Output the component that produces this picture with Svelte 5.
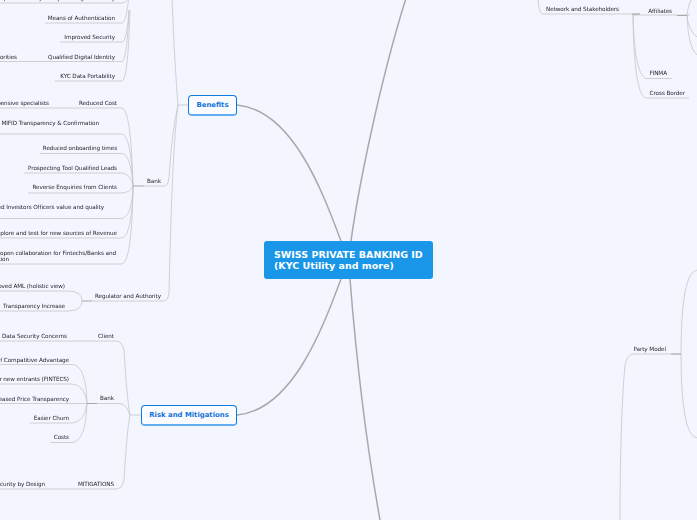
<script>
  // right edge, vertical centre, text
  const labels = [
    { t: 'Simplified Client Journey and Digital Identity', r: 115, y: -2 },
    { t: 'Means of Authentication', r: 115, y: 17.5 },
    { t: 'Improved Security', r: 115, y: 36.5 },
    { t: 'Shared with Authorities', r: 17, y: 56.5 },
    { t: 'Qualified Digital Identity', r: 115, y: 56.5 },
    { t: 'KYC Data Portability', r: 115, y: 75.5 },
    { t: 'Less expensive specialists', r: 49, y: 102.5 },
    { t: 'Reduced Cost', r: 117, y: 102.5 },
    { t: 'MIFID Transparency & Confirmation', r: 99, y: 122.5 },
    { t: 'Reduced onboarding times', r: 117, y: 148 },
    { t: 'Prospecting Tool Qualified Leads', r: 117, y: 168 },
    { t: 'Reverse Enquiries from Clients', r: 117, y: 187 },
    { t: 'Improved Investors Officers value and quality', r: 104, y: 206.5 },
    { t: 'Explore and test for new sources of Revenue', r: 117, y: 232.5 },
    { t: 'An open collaboration for Fintechs/Banks and', r: 116, y: 252.5 },
    { t: 'Innovation', r: 9, y: 258.5 },
    { t: 'Bank', r: 161, y: 180.5 },
    { t: 'Improved AML (holistic view)', r: 65, y: 285.5 },
    { t: 'Transparency Increase', r: 65, y: 305.5 },
    { t: 'Regulator and Authority', r: 161, y: 295.5 },
    { t: 'Data Security Concerns', r: 67, y: 335.5 },
    { t: 'Client', r: 114, y: 335.5 },
    { t: 'Loss of Compatitive Advantage', r: 69, y: 359.5 },
    { t: 'Lower barrier for new entrants (FINTECS)', r: 69, y: 378.5 },
    { t: 'Increased Price Transparency', r: 69, y: 398.5 },
    { t: 'Bank', r: 114, y: 398 },
    { t: 'Easier Churn', r: 69, y: 418 },
    { t: 'Costs', r: 69, y: 437 },
    { t: 'Security by Design', r: 45, y: 483.5 },
    { t: 'MITIGATIONS', r: 114, y: 483.5 },
    { t: 'Network and Stakeholders', r: 619, y: 8.5 },
    { t: 'Affiliates', r: 672, y: 10.5 },
    { t: 'FINMA', r: 667, y: 72.5 },
    { t: 'Cross Border', r: 685, y: 92.5 },
    { t: 'Party Model', r: 666, y: 348.5 }
  ];

  const thin = [
    // benefits, upper group
    'M0 3H122Q128 3 130 -8',
    'M45 23H122Q127 22 129 -8',
    'M60 42H122Q127 41 129 10',
    'M0 61.5H122Q127 60 129 10',
    'M55 81H122Q128 80 130 10',
    // benefits, bank group
    'M0 108H122Q131 109 133 186',
    'M0 134H122Q131 135 133 186',
    'M40 153.5H122Q131 155 133 186',
    'M24 173H122Q131 174 133 186',
    'M28 193H122Q131 192 133 186',
    'M0 218.5H122Q132 216 133 186',
    'M0 238H122Q132 236 133 186',
    'M0 264H122Q132 262 133 186',
    'M144 186H164Q168 186 169 178Q172 130 178 105',
    // regulator
    'M0 291H68Q82 291 82 301Q82 311 68 311H0',
    'M92 301H164Q168 301 169 293Q172 150 178 105',
    // benefits up
    'M172 0Q175 70 178 105H188',
    // risk
    'M0 341H116Q122 341 124 350Q127 400 130 415',
    'M0 364.5H72Q86 365 87 403',
    'M0 384H72Q85 385 87 403',
    'M0 403.5H120Q126 404 130 415',
    'M30 423H72Q85 422 87 403',
    'M50 442.5H72Q86 441 87 403',
    'M0 489H116Q122 489 124 480Q127 430 130 415H141',
    // right
    'M538 0Q539 14 543 14H640',
    'M633 15H690',
    'M633 15Q634 70 645 78.5H672',
    'M633 15Q634 92 645 98H689',
    'M687 15Q688 5 691 0',
    'M687 15Q688 30 697 37',
    'M687 15Q688 48 697 55',
    // party model
    'M681 354H634Q627 354 625 365Q620 420 620 520',
    'M681 354Q681 272 697 270',
    'M681 354Q681 436 697 438'
  ];

  const stubs = ['M133 186H144', 'M82 301H92', 'M87 403.5H97', 'M632 14H640', 'M677 15.5H687', 'M671 354H681'];

  const trunks = [
    'M341 241C322 190 292 110 237 105',
    'M351 241C358 190 380 80 407 -5',
    'M341 279C322 330 292 410 237 415',
    'M350 279C354 330 362 420 380 520'
  ];
</script>

<div class="map">
  <svg class="links" width="697" height="520" viewBox="0 0 697 520" fill="none">
    {#each thin as d}
      <path {d} stroke="#c6c6c6" stroke-width="0.8" />
    {/each}
    {#each stubs as d}
      <path {d} stroke="#a8a8a8" stroke-width="1" />
    {/each}
    {#each trunks as d}
      <path {d} stroke="#a9a9a9" stroke-width="1.5" />
    {/each}
  </svg>

  {#each labels as l}
    <span class="label" style="right:{697 - l.r}px;top:{l.y - 5}px">{l.t}</span>
  {/each}

  <div class="node benefits">Benefits</div>
  <div class="node risk">Risk and Mitigations</div>
  <div class="root">SWISS PRIVATE BANKING ID<br />(KYC Utility and more)</div>
</div>

<style>
  :global(body) {
    background: #f3f6ff;
  }

  .map {
    position: relative;
    width: 697px;
    height: 520px;
    overflow: hidden;
    background: #f3f6ff;
    font-family: 'DejaVu Sans', Verdana, sans-serif;
  }

  .links {
    position: absolute;
    left: 0;
    top: 0;
  }

  .label {
    position: absolute;
    font-size: 5.7px;
    letter-spacing: -0.09px;
    line-height: 10px;
    color: #26262c;
    white-space: nowrap;
    filter: blur(0.25px);
  }

  .node {
    position: absolute;
    display: flex;
    align-items: center;
    justify-content: center;
    box-sizing: border-box;
    height: 21px;
    background: #fbfcff;
    border: 1px solid #0f7ae0;
    border-bottom: 2px solid #63adf2;
    border-radius: 4px;
    color: #1272d8;
    font-size: 6.9px;
    font-weight: bold;
  }

  .benefits {
    left: 188px;
    top: 95px;
    width: 49px;
  }

  .risk {
    left: 141px;
    top: 405px;
    width: 96px;
  }

  .root {
    position: absolute;
    left: 264px;
    top: 241px;
    box-sizing: border-box;
    width: 169px;
    height: 38px;
    padding: 8px 10px;
    background: #1a96e8;
    border-radius: 3px;
    color: #fff;
    font-size: 9.5px;
    font-weight: bold;
    line-height: 11px;
    white-space: nowrap;
  }
</style>
